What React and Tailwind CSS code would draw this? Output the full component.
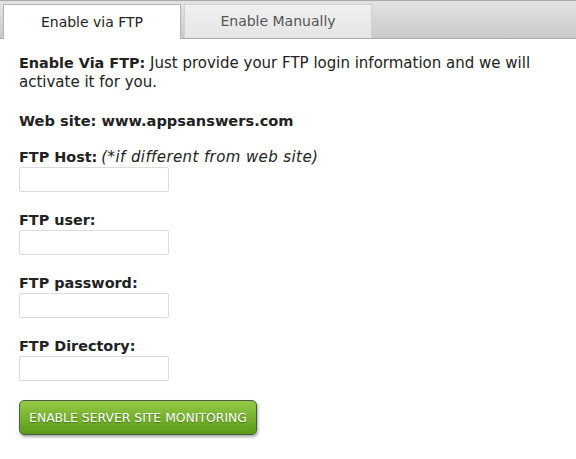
import React from "react";

const fields = [
  { label: "FTP Host:", note: "(*if different from web site)" },
  { label: "FTP user:" },
  { label: "FTP password:" },
  { label: "FTP Directory:" },
];

const App = () => {
  return (
    <div className="w-[576px] h-[459px] bg-white text-[#222] font-['DejaVu_Sans',Verdana,sans-serif] overflow-hidden">
      {/* Tabs */}
      <div className="flex items-end gap-[3px] h-[39px] pl-[3px] border-t border-b border-[#a9a9a9] bg-gradient-to-b from-[#e3e3e3] to-[#c9c9c9]">
        <div className="w-[178px] h-[35px] -mb-px bg-white border border-b-0 border-[#b4b4b4] flex items-center justify-center text-[14px] text-[#222]">
          Enable via FTP
        </div>
        <div className="w-[188px] h-[34px] bg-gradient-to-b from-[#f0f0f0] to-[#e5e5e5] border border-b-0 border-[#d2d2d2] flex items-center justify-center text-[14px] text-[#555]">
          Enable Manually
        </div>
      </div>

      <div className="px-[19px] pt-[15px] text-[15px] leading-[19px]">
        <p>
          <b className="text-[14.4px]">Enable Via FTP:</b> Just provide your FTP login information and we will activate it for you.
        </p>
        <p className="mt-[19px] font-bold text-[14.6px]">Web site: www.appsanswers.com</p>

        <div className="mt-[18px] flex flex-col gap-[19px]">
          {fields.map((f) => (
            <div key={f.label}>
              <div>
                <b className="text-[14.4px]">{f.label}</b>
                {f.note && <i className="ml-[4px] tracking-[0.4px]">{f.note}</i>}
              </div>
              <input
                type="text"
                className="block w-[150px] h-[25px] border border-[#dcdcdc] rounded-[2px] bg-white"
              />
            </div>
          ))}
        </div>

        <button className="mt-[19px] w-[238px] h-[35px] rounded-[5px] border border-[#4f5a45] bg-gradient-to-b from-[#93ca45] to-[#5a9b14] text-white text-[12.4px] uppercase shadow-[1px_2px_3px_rgba(0,0,0,0.35)] [text-shadow:0_1px_1px_rgba(0,0,0,0.35)]">
          Enable server site monitoring
        </button>
      </div>
    </div>
  );
};

export default App;
